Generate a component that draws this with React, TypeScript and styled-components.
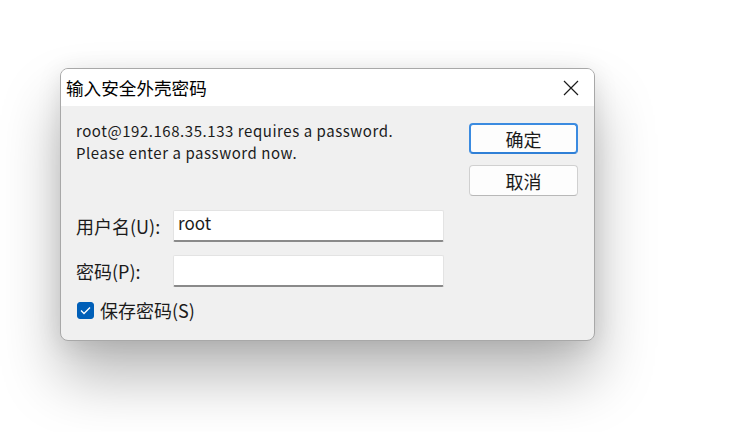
import React, { useState } from 'react';
import styled, { createGlobalStyle } from 'styled-components';

const GlobalStyle = createGlobalStyle`
  html, body {
    margin: 0;
    padding: 0;
    background: #ffffff;
  }
  body {
    font-family: "Noto Sans CJK SC", "Noto Sans", sans-serif;
    color: #1b1b1b;
  }
`;

const Page = styled.div`
  width: 738px;
  height: 432px;
  box-sizing: border-box;
  padding: 68px 0 0 60px;
  overflow: hidden;
`;

const Window = styled.div`
  width: 535px;
  height: 273px;
  box-sizing: border-box;
  border: 1px solid #a8a8a8;
  border-radius: 8px;
  overflow: hidden;
  display: flex;
  flex-direction: column;
  background: #f0f0f0;
  box-shadow: 0 36px 60px rgba(0, 0, 0, 0.28), 0 4px 24px rgba(0, 0, 0, 0.1);
`;

const TitleBar = styled.div`
  height: 37px;
  flex: none;
  background: #ffffff;
  display: flex;
  align-items: center;
  justify-content: space-between;
  padding: 0 14px 0 5px;
`;

const Title = styled.span`
  font-size: 17.6px;
  color: #000;
`;

const CloseButton = styled.button`
  border: 0;
  background: transparent;
  padding: 0;
  width: 18px;
  height: 18px;
  display: flex;
  align-items: center;
  justify-content: center;
  cursor: pointer;
`;

const Body = styled.div`
  flex: 1;
  display: flex;
  padding: 14px 16px 0 15px;
  gap: 22px;
`;

const Main = styled.div`
  flex: 1;
  display: flex;
  flex-direction: column;
`;

const Message = styled.p`
  margin: 0;
  font-size: 15px;
  letter-spacing: 0.55px;
  line-height: 22px;
  color: #1b1b1b;
`;

const Form = styled.div`
  display: grid;
  grid-template-columns: 97px 271px;
  grid-auto-rows: 32px;
  row-gap: 13px;
  align-items: center;
  margin-top: 46px;
`;

const Label = styled.label`
  font-size: 18px;
  color: #1b1b1b;
`;

const Input = styled.input`
  box-sizing: border-box;
  width: 271px;
  height: 32px;
  border: 1px solid #e3e3e3;
  border-bottom: 2px solid #8a8a8a;
  border-radius: 2px;
  background: #ffffff;
  padding: 0 4px 6px;
  font-family: "Noto Sans CJK SC", "Noto Sans", sans-serif;
  font-size: 17px;
  color: #1b1b1b;
  outline: none;
  line-height: 26px;
`;

const CheckRow = styled.label`
  display: flex;
  align-items: center;
  gap: 6px;
  margin-top: 10px;
  font-size: 18px;
  color: #1b1b1b;
  cursor: pointer;
`;

const CheckBox = styled.span<{ $checked: boolean }>`
  width: 17px;
  height: 17px;
  margin-left: 1px;
  border-radius: 3px;
  background: ${(p) => (p.$checked ? '#005fb8' : '#ffffff')};
  border: 1px solid ${(p) => (p.$checked ? '#005fb8' : '#8a8a8a')};
  box-sizing: border-box;
  display: flex;
  align-items: center;
  justify-content: center;
`;

const Buttons = styled.div`
  width: 109px;
  display: flex;
  flex-direction: column;
  gap: 11px;
  padding-top: 3px;
`;

const Button = styled.button<{ $primary?: boolean }>`
  height: 31px;
  box-sizing: border-box;
  border-radius: 4px;
  background: #fdfdfd;
  border: ${(p) => (p.$primary ? '2px solid #3b8be0' : '1px solid #d0d0d0')};
  border-bottom-color: ${(p) => (p.$primary ? '#2f7fd6' : '#b8b8b8')};
  font-family: "Noto Sans CJK SC", "Noto Sans", sans-serif;
  font-size: 18px;
  line-height: 1;
  color: #1b1b1b;
  cursor: pointer;
  padding: 0;
`;

export default function App() {
  const [save, setSave] = useState(true);
  const [user, setUser] = useState('root');
  const [pass, setPass] = useState('');

  return (
    <>
      <GlobalStyle />
      <Page>
        <Window>
          <TitleBar>
            <Title>输入安全外壳密码</Title>
            <CloseButton aria-label="关闭">
              <svg width="16" height="16" viewBox="0 0 16 16">
                <path d="M1 1 L15 15 M15 1 L1 15" stroke="#1b1b1b" strokeWidth="1.2" fill="none" />
              </svg>
            </CloseButton>
          </TitleBar>
          <Body>
            <Main>
              <Message>
                root@192.168.35.133 requires a password.
                <br />
                Please enter a password now.
              </Message>
              <Form>
                <Label htmlFor="user">用户名(U):</Label>
                <Input id="user" value={user} onChange={(e) => setUser(e.target.value)} />
                <Label htmlFor="pass">密码(P):</Label>
                <Input id="pass" type="password" value={pass} onChange={(e) => setPass(e.target.value)} />
              </Form>
              <CheckRow onClick={() => setSave(!save)}>
                <CheckBox $checked={save}>
                  {save && (
                    <svg width="11" height="9" viewBox="0 0 11 9">
                      <path d="M1 4.5 L4 7.5 L10 1.5" stroke="#ffffff" strokeWidth="1.3" fill="none" />
                    </svg>
                  )}
                </CheckBox>
                保存密码(S)
              </CheckRow>
            </Main>
            <Buttons>
              <Button $primary>确定</Button>
              <Button>取消</Button>
            </Buttons>
          </Body>
        </Window>
      </Page>
    </>
  );
}
